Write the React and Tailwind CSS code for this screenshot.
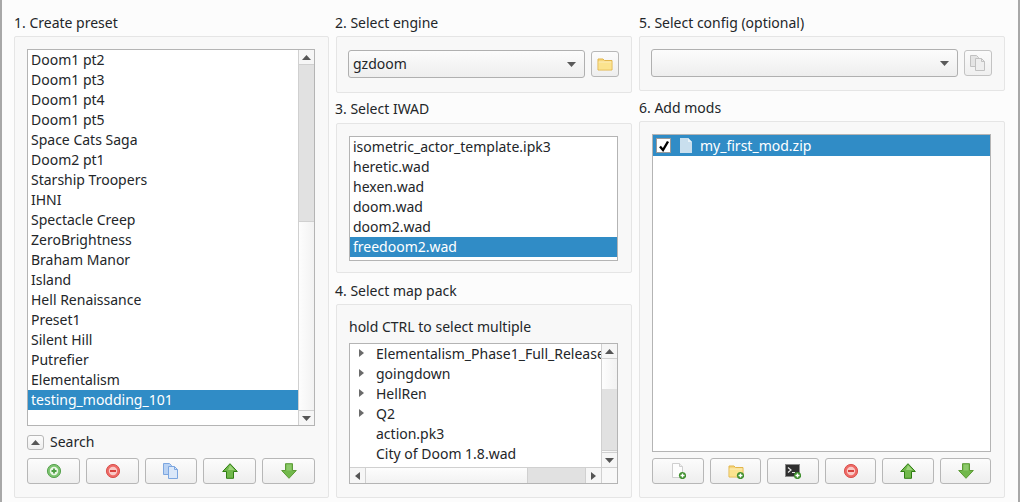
const presets = ['Doom1 pt2', 'Doom1 pt3', 'Doom1 pt4', 'Doom1 pt5', 'Space Cats Saga', 'Doom2 pt1', 'Starship Troopers', 'IHNI', 'Spectacle Creep', 'ZeroBrightness', 'Braham Manor', 'Island', 'Hell Renaissance', 'Preset1', 'Silent Hill', 'Putrefier', 'Elementalism', 'testing_modding_101'];
const iwads = ['isometric_actor_template.ipk3', 'heretic.wad', 'hexen.wad', 'doom.wad', 'doom2.wad', 'freedoom2.wad'];
const maps = [
  { name: 'Elementalism_Phase1_Full_Release', folder: true },
  { name: 'goingdown', folder: true },
  { name: 'HellRen', folder: true },
  { name: 'Q2', folder: true },
  { name: 'action.pk3' },
  { name: 'City of Doom 1.8.wad' },
];

function Tri({ dir = 'up', color = '#555' }) {
  if (dir === 'up' || dir === 'down') {
    return (
      <svg className="w-[9px] h-[5px]" viewBox="0 0 9 5">
        <polygon points={dir === 'up' ? '0,5 4.5,0 9,5' : '0,0 9,0 4.5,5'} fill={color} />
      </svg>
    );
  }
  return (
    <svg className="w-[5px] h-[8px]" viewBox="0 0 5 8">
      <polygon points={dir === 'left' ? '5,0 5,8 0,4' : '0,0 0,8 5,4'} fill={color} />
    </svg>
  );
}

function AddBadge({ x = 9, y = 9 }) {
  return (
    <g>
      <circle cx={x + 3.5} cy={y + 3.5} r="3.6" fill="#3f8f2e" />
      <path d={`M${x + 1.5} ${y + 3.5}h4M${x + 3.5} ${y + 1.5}v4`} stroke="#fff" strokeWidth="1.4" />
    </g>
  );
}

function PlusIcon() {
  return (
    <svg className="w-4 h-4" viewBox="0 0 16 16">
      <circle cx="8" cy="8" r="6.6" fill="#7cc36f" stroke="#5aa352" />
      <circle cx="8" cy="8" r="4.2" fill="#eaf6e6" />
      <path d="M5.5 8h5M8 5.5v5" stroke="#4b9e42" strokeWidth="1.8" />
    </svg>
  );
}

function MinusIcon() {
  return (
    <svg className="w-4 h-4" viewBox="0 0 16 16">
      <circle cx="8" cy="8" r="6.6" fill="#ee6a66" stroke="#d9534f" />
      <circle cx="8" cy="8" r="4.2" fill="#f9c9c6" />
      <path d="M5 8h6" stroke="#d8423e" strokeWidth="2" />
    </svg>
  );
}

function CopyIcon({ disabled }) {
  const stroke = disabled ? '#b4b4b4' : '#7ca6e0';
  const back = disabled ? '#e0e0e0' : '#b9d2f3';
  const front = disabled ? '#ececec' : '#dbe8f9';
  return (
    <svg className="w-4 h-4" viewBox="0 0 16 16">
      <path d="M.5 .5h6l2 2v9h-8z" fill={back} stroke={stroke} />
      <path d="M5.5 3.5h6l3 3v9h-9z" fill={front} stroke={stroke} />
      <path d="M11.5 3.5v3h3" fill="none" stroke={stroke} />
    </svg>
  );
}

function ArrowUpIcon() {
  return (
    <svg className="w-4 h-4" viewBox="0 0 16 16">
      <path d="M8 .7 15.3 8.5H11.5V15.3H4.5V8.5H.7Z" fill="#71b84b" stroke="#2f7d12" strokeLinejoin="round" />
      <path d="M8 2.2 12.5 7H6Z" fill="#9ed47c" />
    </svg>
  );
}

function ArrowDownIcon() {
  return (
    <svg className="w-4 h-4" viewBox="0 0 16 16">
      <path d="M8 15.3 15.3 7.5H11.5V.7H4.5V7.5H.7Z" fill="#71b84b" stroke="#5c9a35" strokeLinejoin="round" />
      <path d="M5.5 1.5h5v6h-5z" fill="#8cc96a" />
    </svg>
  );
}

function FolderIcon({ children }) {
  return (
    <svg className="w-4 h-4" viewBox="0 0 16 16">
      <path d="M1 3h5l1.5 1.5H15v9.5H1z" fill="#f6d67c" stroke="#e2b54a" />
      <path d="M1.5 6.5h13v7h-13z" fill="#fbe38e" />
      <path d="M1.5 6h13" stroke="#fff3c4" />
      {children}
    </svg>
  );
}

function FileAddIcon() {
  return (
    <svg className="w-4 h-4" viewBox="0 0 16 16">
      <path d="M2.5 .5h7l3 3v11h-10z" fill="#fdfdfd" stroke="#cfcfcf" />
      <path d="M9.5 .5v3h3" fill="#eee" stroke="#cfcfcf" />
      <AddBadge />
    </svg>
  );
}

function TerminalAddIcon() {
  return (
    <svg className="w-4 h-4" viewBox="0 0 16 16">
      <rect x=".5" y="1.5" width="14" height="12" fill="#2e2e2e" stroke="#8a8a8a" />
      <path d="M3 4.5 6 7 3 9.5" fill="none" stroke="#e8e8e8" strokeWidth="1.2" />
      <path d="M7 9.5h3" stroke="#e8e8e8" />
      <AddBadge />
    </svg>
  );
}

function FileIcon() {
  return (
    <svg className="w-3 h-[15px]" viewBox="0 0 12 15">
      <path d="M0 0h8l4 4v11H0z" fill="#c9dfee" />
      <path d="M8 0v4h4z" fill="#e9f3f9" />
    </svg>
  );
}

function Btn({ className = '', children }) {
  return (
    <button className={`flex items-center justify-center h-[26px] rounded-[3px] border border-[#b7b7b7] bg-linear-to-b from-[#fcfcfc] to-[#eeeeee] ${className}`}>
      {children}
    </button>
  );
}

function Label({ children, className = '' }) {
  return <div className={`h-5 leading-5 whitespace-nowrap ${className}`}>{children}</div>;
}

function Group({ className = '', children }) {
  return <div className={`rounded-[2px] border border-[#e5e5e5] bg-[#f8f8f8] ${className}`}>{children}</div>;
}

function Combo({ text, className = '' }) {
  return (
    <div className={`flex items-center justify-between h-7 pl-[4px] pr-[8px] rounded-[3px] border border-[#b0b0b0] bg-linear-to-b from-[#fcfcfc] to-[#eeeeee] ${className}`}>
      <span className="mb-[2px]">{text}</span>
      <Tri dir="down" color="#5a5a5a" />
    </div>
  );
}

function VScroll({ before, thumb }) {
  return (
    <div className="flex flex-col w-4 shrink-0 border-l border-[#d0d0d0] bg-linear-to-r from-[#fdfdfd] to-[#f2f2f2]">
      <div className="flex items-center justify-center h-[15px] shrink-0 border-b border-[#d0d0d0] bg-[#f6f6f6]">
        <Tri dir="up" />
      </div>
      <div style={{ height: before }} className="shrink-0" />
      <div style={{ height: thumb }} className="shrink-0 bg-[#e1e1e1] border-b border-[#d0d0d0]" />
      <div className="flex items-center justify-center h-[15px] shrink-0 mt-auto border-t border-[#d0d0d0] bg-[#f6f6f6]">
        <Tri dir="down" />
      </div>
    </div>
  );
}

function PresetGroup() {
  return (
    <Group className="flex-1 flex flex-col pt-3 pl-3 pr-[13px]">
      <div className="flex h-[377px] border border-[#b4b4b4] bg-white">
        <div className="flex-1 min-w-0">
          {presets.map((p) => (
            <div key={p} className={`h-5 leading-5 pl-[3px] ${p === 'testing_modding_101' ? 'bg-[#308cc6] text-white' : ''}`}>{p}</div>
          ))}
        </div>
        <VScroll before={0} thumb={157} />
      </div>
      <div className="flex items-center gap-[6px] mt-[9px] h-[15px]">
        <button className="flex items-center justify-center w-[17px] h-[15px] rounded-[3px] border border-[#b7b7b7] bg-linear-to-b from-[#fcfcfc] to-[#eeeeee]">
          <Tri dir="up" />
        </button>
        <span className="mb-[2px]">Search</span>
      </div>
      <div className="flex justify-between mt-[8px]">
        <Btn className="w-[53px]"><PlusIcon /></Btn>
        <Btn className="w-[53px]"><MinusIcon /></Btn>
        <Btn className="w-[52px]"><CopyIcon /></Btn>
        <Btn className="w-[53px]"><ArrowUpIcon /></Btn>
        <Btn className="w-[53px]"><ArrowDownIcon /></Btn>
      </div>
    </Group>
  );
}

function MapTree() {
  return (
    <div className="flex flex-col h-[141px] mt-[6px] border border-[#b4b4b4] bg-white">
      <div className="flex flex-1 min-h-0">
        <div className="flex-1 min-w-0 overflow-hidden">
          {maps.map((m, i) => (
            <div key={m.name} className={`flex items-center h-5 whitespace-nowrap ${i === 0 ? '-mt-px' : ''}`}>
              <div className="flex items-center justify-center w-[26px] shrink-0 pr-[3px]">
                {m.folder && <Tri dir="right" color="#6a6a6a" />}
              </div>
              <span>{m.name}</span>
            </div>
          ))}
        </div>
        <VScroll before={30} thumb={62} />
      </div>
      <div className="flex h-4 shrink-0 border-t border-[#d0d0d0] bg-linear-to-b from-[#fdfdfd] to-[#f2f2f2]">
        <div className="flex items-center justify-center w-4 border-r border-[#d0d0d0] bg-[#f6f6f6]"><Tri dir="left" /></div>
        <div className="w-[161px]" />
        <div className="w-[59px] bg-[#e1e1e1] border-x border-[#d0d0d0]" />
        <div className="flex items-center justify-center w-4 border-r border-[#d0d0d0] bg-[#f6f6f6]"><Tri dir="right" /></div>
        <div className="flex-1 bg-[#f8f8f8]" />
      </div>
    </div>
  );
}

export default function App() {
  return (
    <div className="flex gap-[7px] w-[1020px] h-[502px] pl-3 pr-[12px] pt-[13px] pb-[4px] border-x-2 border-[#a8a8a8] bg-[#fcfcfc] text-[14px] text-[#232629] overflow-hidden font-['Noto_Sans',sans-serif]">
      <div className="flex flex-col w-[315px]">
        <Label className="mb-[3px]">1. Create preset</Label>
        <PresetGroup />
      </div>

      <div className="flex flex-col w-[296px]">
        <Label className="mb-[3px] -ml-px">2. Select engine</Label>
        <Group className="flex items-center gap-[6px] h-[57px] pl-[11px] pr-3 pb-[1px]">
          <Combo text="gzdoom" className="flex-1" />
          <Btn className="w-[28px] h-7"><FolderIcon /></Btn>
        </Group>

        <Label className="mt-[6px] mb-[4px] -ml-px">3. Select IWAD</Label>
        <Group className="h-[150px] pt-3 pl-3 pr-[13px]">
          <div className="h-[125px] border border-[#b4b4b4] bg-white">
            {iwads.map((w) => (
              <div key={w} className={`h-5 leading-5 pl-[3px] ${w === 'freedoom2.wad' ? 'bg-[#308cc6] text-white' : ''}`}>{w}</div>
            ))}
          </div>
        </Group>

        <Label className="mt-[8px] mb-[3px] -ml-px">4. Select map pack</Label>
        <Group className="flex-1 pt-3 pl-3 pr-[13px]">
          <div className="h-5 leading-5">hold CTRL to select multiple</div>
          <MapTree />
        </Group>
      </div>

      <div className="flex flex-col w-[366px]">
        <Label className="mb-[3px]">5. Select config (optional)</Label>
        <Group className="flex items-center gap-[6px] h-[55px] pl-[11px] pr-3 pb-[1px]">
          <Combo text="" className="flex-1" />
          <Btn className="w-[28px] h-7 opacity-80"><CopyIcon disabled /></Btn>
        </Group>

        <Label className="mt-[7px] mb-[3px]">6. Add mods</Label>
        <Group className="flex-1 flex flex-col pt-3 pl-3 pr-[13px]">
          <div className="h-[318px] border border-[#b4b4b4] bg-white">
            <div className="flex items-center h-[21px] bg-[#308cc6] text-white">
              <div className="flex items-center justify-center w-[15px] h-[15px] ml-[3px] bg-white border border-[#9a9a9a]">
                <svg className="w-3 h-3" viewBox="0 0 12 12">
                  <path d="M2 6.5 5 10 10 1.5" fill="none" stroke="#000" strokeWidth="2.4" />
                </svg>
              </div>
              <div className="ml-[9px] flex items-center"><FileIcon /></div>
              <span className="ml-[8px]">my_first_mod.zip</span>
            </div>
          </div>
          <div className="flex justify-between mt-[6px]">
            <Btn className="w-[52px]"><FileAddIcon /></Btn>
            <Btn className="w-[51px]"><FolderIcon><AddBadge /></FolderIcon></Btn>
            <Btn className="w-[52px]"><TerminalAddIcon /></Btn>
            <Btn className="w-[51px]"><MinusIcon /></Btn>
            <Btn className="w-[52px]"><ArrowUpIcon /></Btn>
            <Btn className="w-[51px]"><ArrowDownIcon /></Btn>
          </div>
        </Group>
      </div>
    </div>
  );
}
